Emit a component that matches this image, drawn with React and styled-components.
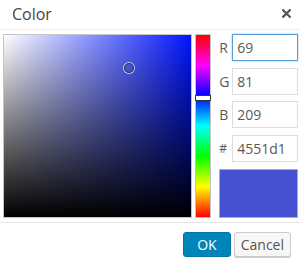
import React from "react";
import styled, { createGlobalStyle } from "styled-components";

const Global = createGlobalStyle`
  html, body { margin: 0; padding: 0; background: #fff; }
  body { font-family: "Open Sans", "Noto Sans", "Liberation Sans", sans-serif; }
  * { box-sizing: border-box; }
`;

const Dialog = styled.div`
  width: 300px;
  height: 264px;
  background: #fff;
  display: flex;
  flex-direction: column;
  overflow: hidden;
`;

const Header = styled.div`
  height: 30px;
  border-bottom: 1px solid #eee;
  display: flex;
  align-items: center;
  justify-content: space-between;
  padding: 0 8px 0 12px;
`;

const Title = styled.div`
  font-size: 16px;
  color: #444;
  margin-top: -1px;
`;

const Close = styled.svg`
  width: 9px;
  height: 9px;
  margin-top: -2px;
  margin-right: 1px;
`;

const Body = styled.div`
  height: 193px;
  padding: 4px 2px 0 3px;
  display: flex;
  border-bottom: 1px solid #e6e6e6;
`;

const SV = styled.div`
  position: relative;
  width: 190px;
  height: 184px;
  border: 1px solid #c5c5c5;
  background:
    linear-gradient(to bottom, rgba(0,0,0,0), #000),
    linear-gradient(to right, #fff, ${(p) => p.$hue});
`;

const Pointer = styled.div`
  position: absolute;
  width: 10px;
  height: 10px;
  border-radius: 50%;
  border: 1px solid #333;
  box-shadow: 0 0 0 1px rgba(255,255,255,0.7);
  transform: translate(-50%, -50%);
`;

const Hue = styled.div`
  position: relative;
  margin-left: 3px;
  width: 16px;
  height: 184px;
  border: 1px solid #c5c5c5;
  background: linear-gradient(
    to bottom,
    #f00 0%,
    #f0f 16.67%,
    #00f 33.33%,
    #0ff 50%,
    #0f0 66.67%,
    #ff0 83.33%,
    #f00 100%
  );
`;

const HueHandle = styled.div`
  position: absolute;
  left: -1px;
  right: -1px;
  height: 6px;
  background: #fff;
  border: 1px solid #333;
  transform: translateY(-50%);
`;

const Side = styled.div`
  margin-left: 8px;
  width: 79px;
  display: flex;
  flex-direction: column;
  gap: 6.5px;
`;

const Field = styled.label`
  display: flex;
  align-items: center;
  height: 27px;
`;

const Lbl = styled.span`
  width: 13px;
  font-size: ${(p) => (p.$small ? "12px" : "14px")};
  color: #595959;
`;

const Input = styled.div`
  flex: 1;
  height: 27px;
  border: 1px solid ${(p) => (p.$focus ? "#5b9dd9" : "#ddd")};
  box-shadow: ${(p) => (p.$focus ? "0 0 2px rgba(30,140,190,0.5)" : "none")};
  padding: 0 0 0 4px;
  display: flex;
  align-items: center;
  font-size: 14px;
  color: #595959;
`;

const Swatch = styled.div`
  margin-top: 1px;
  height: 49px;
  background: ${(p) => p.$color};
  border: 1px solid #a3a8e0;
`;

const Footer = styled.div`
  flex: 1;
  display: flex;
  justify-content: flex-end;
  align-items: flex-start;
  padding: 9px 9px 0 0;
  gap: 3px;
`;

const Button = styled.button`
  height: 25px;
  padding: 0 ${(p) => (p.$primary ? "13px" : "6px")};
  min-width: ${(p) => (p.$primary ? "43px" : "45px")};
  font-family: inherit;
  font-size: 14px;
  border-radius: 3px;
  border: 1px solid ${(p) => (p.$primary ? "#0073aa" : "#ccc")};
  background: ${(p) => (p.$primary ? "#0085ba" : "#f7f7f7")};
  color: ${(p) => (p.$primary ? "#fff" : "#555")};
  box-shadow: ${(p) => (p.$primary ? "none" : "0 1px 0 #ccc")};
  line-height: 1;
`;

export default function App() {
  const r = 69, g = 81, b = 209;
  const max = Math.max(r, g, b), min = Math.min(r, g, b);
  const s = (max - min) / max;
  const v = max / 255;
  const hue = 235;
  const fields = [
    { k: "R", v: "69", focus: true },
    { k: "G", v: "81" },
    { k: "B", v: "209" },
    { k: "#", v: "4551d1", small: true },
  ];
  return (
    <>
      <Global />
      <Dialog>
        <Header>
          <Title>Color</Title>
          <Close viewBox="0 0 9 9">
            <path d="M1.2 1.2 L7.8 7.8 M7.8 1.2 L1.2 7.8" stroke="#595959" strokeWidth="2.3" strokeLinecap="square" fill="none" />
          </Close>
        </Header>
        <Body>
          <SV $hue="#0015ff">
            <Pointer style={{ left: `${s * 100}%`, top: `${(1 - v) * 100}%` }} />
          </SV>
          <Hue>
            <HueHandle style={{ top: `${((360 - hue) / 360) * 100}%` }} />
          </Hue>
          <Side>
            {fields.map((f) => (
              <Field key={f.k}>
                <Lbl $small={f.small}>{f.k}</Lbl>
                <Input $focus={f.focus}>{f.v}</Input>
              </Field>
            ))}
            <Swatch $color="#4551d1" />
          </Side>
        </Body>
        <Footer>
          <Button $primary>OK</Button>
          <Button>Cancel</Button>
        </Footer>
      </Dialog>
    </>
  );
}
